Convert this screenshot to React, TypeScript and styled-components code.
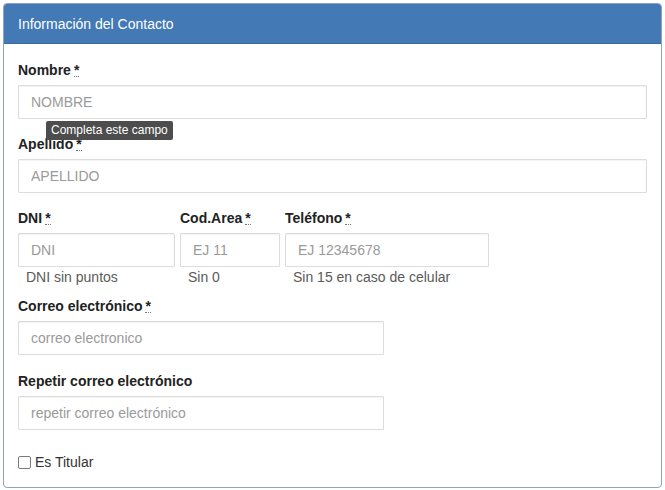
import React from "react";
import styled, { createGlobalStyle } from "styled-components";

const GlobalStyle = createGlobalStyle`
  html, body {
    margin: 0;
    padding: 0;
    background: #ffffff;
    font-family: "Liberation Sans", Arial, sans-serif;
    font-size: 14px;
    color: #333333;
  }
  * {
    box-sizing: border-box;
  }
`;

const Page = styled.div`
  padding: 3px 3px 0;
`;

const Panel = styled.div`
  border: 1px solid #8fa3bf;
  border-radius: 4px;
  background: #ffffff;
  overflow: hidden;
  height: 485px;
`;

const PanelHeading = styled.div`
  background: #4379b4;
  color: #ffffff;
  height: 40px;
  padding: 0 14px;
  display: flex;
  align-items: center;
  font-size: 14px;
  border-bottom: 1px solid #3a6aa0;
`;

const PanelBody = styled.div`
  padding: 16px 14px 0;
`;

const FormGroup = styled.div<{ $width?: number; $gap?: number }>`
  position: relative;
  margin-bottom: ${(p) => p.$gap ?? 15}px;
  width: ${(p) => (p.$width ? `${p.$width}px` : "100%")};
`;

const Row = styled.div`
  display: flex;
  gap: 5px;
  margin-bottom: 9px;
`;

const Column = styled.div<{ $width: number }>`
  width: ${(p) => p.$width}px;
  flex-shrink: 0;
`;

const Label = styled.label`
  display: block;
  font-weight: bold;
  line-height: 20px;
  margin-bottom: 5px;
  color: #222222;
`;

const Required = styled.abbr`
  margin-left: 3px;
  text-decoration: none;
  border-bottom: 1px dotted #777777;
  line-height: 12px;
  display: inline-block;
`;

const Input = styled.input`
  display: block;
  width: 100%;
  height: 34px;
  padding: 6px 12px;
  font-family: inherit;
  font-size: 14px;
  color: #555555;
  background: #ffffff;
  border: 1px solid #dcdcdc;
  border-radius: 1px;
  outline: none;
  box-shadow: inset 0 1px 1px rgba(0, 0, 0, 0.05);
  &::placeholder {
    color: #9a9a9a;
  }
`;

const HelpText = styled.div`
  padding-left: 8px;
  line-height: 20px;
  color: #5a5a5a;
`;

const Tooltip = styled.div`
  position: absolute;
  left: 28px;
  top: 61px;
  background: #4d4d4d;
  color: #ffffff;
  font-size: 12px;
  line-height: 19px;
  padding: 0 5px;
  border-radius: 2px;
  white-space: nowrap;
  z-index: 2;
`;

const CheckRow = styled.label`
  display: flex;
  align-items: center;
  gap: 4px;
  margin-top: 24px;
  color: #333333;
`;

const Box = styled.span`
  width: 13px;
  height: 13px;
  border: 1px solid #7a7a7a;
  border-radius: 2px;
  background: #ffffff;
  display: inline-block;
`;

type FieldProps = {
  label: string;
  placeholder: string;
  required?: boolean;
  width?: number;
  gap?: number;
  children?: React.ReactNode;
};

const Field: React.FC<FieldProps> = ({ label, placeholder, required, width, gap, children }) => (
  <FormGroup $width={width} $gap={gap}>
    <Label>
      {label}
      {required && <Required title="requerido">*</Required>}
    </Label>
    <Input placeholder={placeholder} />
    {children}
  </FormGroup>
);

const columns = [
  { label: "DNI", placeholder: "DNI", help: "DNI sin puntos", width: 157 },
  { label: "Cod.Area", placeholder: "EJ 11", help: "Sin 0", width: 100 },
  { label: "Teléfono", placeholder: "EJ 12345678", help: "Sin 15 en caso de celular", width: 204 },
];

export default function App() {
  return (
    <>
      <GlobalStyle />
      <Page>
        <Panel>
          <PanelHeading>Información del Contacto</PanelHeading>
          <PanelBody>
            <Field label="Nombre" placeholder="NOMBRE" required>
              <Tooltip>Completa este campo</Tooltip>
            </Field>
            <Field label="Apellido" placeholder="APELLIDO" required />
            <Row>
              {columns.map((c) => (
                <Column key={c.label} $width={c.width}>
                  <Label>
                    {c.label}
                    <Required title="requerido">*</Required>
                  </Label>
                  <Input placeholder={c.placeholder} />
                  <HelpText>{c.help}</HelpText>
                </Column>
              ))}
            </Row>
            <Field label="Correo electrónico" placeholder="correo electronico" required width={366} gap={16} />
            <Field label="Repetir correo electrónico" placeholder="repetir correo electrónico" width={366} />
            <CheckRow>
              <Box />
              Es Titular
            </CheckRow>
          </PanelBody>
        </Panel>
      </Page>
    </>
  );
}
